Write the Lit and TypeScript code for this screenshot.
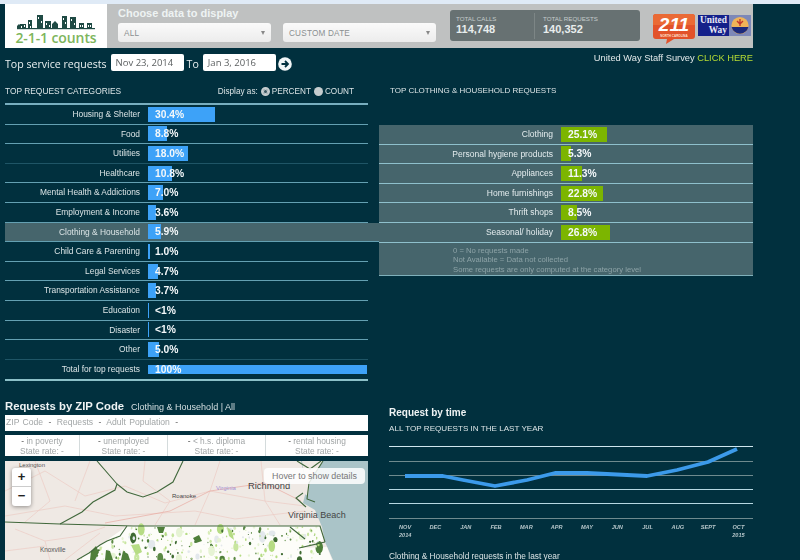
import { LitElement, html, css, svg } from "lit";
import { customElement } from "lit/decorators.js";

const CATS: [string, string, number][] = [
  ["Housing & Shelter", "30.4%", 30.4],
  ["Food", "8.8%", 8.8],
  ["Utilities", "18.0%", 18],
  ["Healthcare", "10.8%", 10.8],
  ["Mental Health & Addictions", "7.0%", 7],
  ["Employment & Income", "3.6%", 3.6],
  ["Clothing & Household", "5.9%", 5.9],
  ["Child Care & Parenting", "1.0%", 1],
  ["Legal Services", "4.7%", 4.7],
  ["Transportation Assistance", "3.7%", 3.7],
  ["Education", "<1%", 0.5],
  ["Disaster", "<1%", 0.5],
  ["Other", "5.0%", 5],
];
const SUBS: [string, string, number][] = [
  ["Clothing", "25.1%", 25.1],
  ["Personal hygiene products", "5.3%", 5.6],
  ["Appliances", "11.3%", 11.3],
  ["Home furnishings", "22.8%", 22.8],
  ["Thrift shops", "8.5%", 8.7],
  ["Seasonal/ holiday", "26.8%", 26.8],
];
const MONTHS: [string, string][] = [
  ["NOV", "2014"], ["DEC", ""], ["JAN", ""], ["FEB", ""], ["MAR", ""], ["APR", ""],
  ["MAY", ""], ["JUN", ""], ["JUL", ""], ["AUG", ""], ["SEPT", ""], ["OCT", "2015"],
];
const STATS = ["in poverty", "unemployed", "< h.s. diploma", "rental housing"];

function patches() {
  let seed = 17;
  const rnd = () => ((seed = (seed * 16807) % 2147483647) / 2147483647);
  const out = [];
  const dark = ["#4f7f3a", "#5c8a45", "#3f6b33"];
  const light = ["#b6dc84", "#d8edb8", "#c8e6a0", "#e6f3d4", "#e3e8ec"];
  for (let i = 0; i < 300; i++) {
    const x = 72 + rnd() * 248;
    const y = 66 + rnd() * 33;
    const isDark = rnd() > 0.72;
    const big = rnd() > 0.9;
    const r = big ? 1.8 + rnd() * 2 : 0.4 + rnd() * 0.9;
    const pick = isDark ? dark : light;
    const tone = pick[Math.floor(rnd() * pick.length)];
    const ry = r * (0.8 + rnd());
    if (x < 122 - (y - 65) * 1.5 || x > 316) continue;
    out.push(svg`<ellipse cx=${x} cy=${y} rx=${r} ry=${ry} fill=${tone} />`);
  }
  return out;
}

@customElement("app-root")
export class AppRoot extends LitElement {
  static styles = css`
    :host { display: block; width: 800px; height: 560px; overflow: hidden; background: #01303e; font-family: "Liberation Sans", Arial, sans-serif; color: #dfe8ea; }
    .strip { height: 4px; background: #dfeaf6; }
    .page { width: 748px; margin-left: 5px; filter: blur(0.3px); }
    .head { display: flex; height: 44px; background: #bfc1c1; }
    .logo { width: 102px; background: #fff; display: flex; flex-direction: column; align-items: center; justify-content: flex-end; padding-bottom: 3px; box-sizing: border-box; }
    .logo svg { display: block; }
    .logo b { font: 600 14px "Open Sans", sans-serif; color: #7db55c; line-height: 14px; letter-spacing: -0.1px; margin-top: 1px; white-space: nowrap; }
    .choose { width: 342px; padding: 3px 0 0 11px; box-sizing: border-box; }
    .choose h3 { margin: 0; font: bold 11px/13px "Liberation Sans", sans-serif; color: #eef3f3; }
    .selects { display: flex; gap: 12px; margin-top: 3px; }
    .sel { flex: 0 0 153px; height: 19px; border-radius: 3px; background: linear-gradient(#fafafa, #ececec); color: #8a8f90; font-size: 8.2px; display: flex; align-items: center; justify-content: space-between; padding: 1px 6px 0 6px; box-sizing: border-box; letter-spacing: .2px; }
    .sel i { width: 0; height: 0; border: 2.5px solid transparent; border-top: 4px solid #888; border-bottom: 0; }
    .stats { width: 190px; height: 31px; margin: 6px 0 0 1px; background: #677172; border-radius: 3px; display: flex; }
    .stat { color: #e8eded; }
    .stat small { display: block; font-size: 6.2px; line-height: 7px; color: #c5cccc; }
    .stat b { display: block; font-size: 11px; line-height: 12px; margin-top: 1px; }
    .stat.a { width: 85px; border-right: 1px solid #7d8686; box-sizing: border-box; height: 26px; margin-top: 3px; padding: 2px 0 0 6px; }
    .stat.b { padding: 5px 0 0 8px; }
    .brands { display: flex; margin: 9px 0 0 12px; gap: 2px; align-items: flex-start; }
    .uw { width: 53px; height: 21px; margin-top: 2px; background: #7d88b8; display: flex; }
    .uw div { width: 31px; background: #14208a; color: #e8e8f4; font: bold 9.4px/9.8px "Liberation Serif", serif; text-align: right; padding: 1px 2px 0 0; box-sizing: border-box; }
    .uw svg { flex: 1; }

    .service { display: flex; height: 32px; align-items: flex-start; }
    .service .t { font: 10.6px/16px "Open Sans", sans-serif; color: #eaf0f1; margin-top: 8px; white-space: nowrap; }
    .date { background: #fff; color: #5b5f60; font: 9.5px/17px "Open Sans", sans-serif; width: 73px; height: 17px; border-radius: 2px; margin-top: 6px; padding-left: 5px; box-sizing: border-box; }
    .date.first { margin-left: 4px; }
    .to { margin: 8px 4px 0 3px; font: 10.6px/16px "Open Sans", sans-serif; color: #eaf0f1; }
    .go { margin: 9px 0 0 2px; }
    .survey { margin-left: auto; margin-top: 3px; font-size: 9.3px; line-height: 14px; color: #e2e9ea; }
    .survey span { color: #b7dc33; }

    .cols { display: grid; grid-template-columns: 363px 374px; column-gap: 11px; }
    .title { height: 23px; font-size: 8.4px; line-height: 22px; color: #dbe4e6; display: flex; white-space: nowrap; }
    .title.r { font-size: 8px; padding-left: 11px; }
    .display { margin-left: auto; margin-right: 14px; display: flex; align-items: center; gap: 2px; font-size: 8.2px; }
    .radio { width: 9px; height: 9px; border-radius: 50%; background: #c6cdcf; box-sizing: border-box; margin-left: 1px; }
    .radio.on { border: 2px solid #c6cdcf; background: #3a5762; box-shadow: inset 0 0 0 1px #c6cdcf; }
    .table { border-top: 2px solid #78aebf; border-bottom: 2px solid #8cc0c8; }
    .row { display: flex; height: 19.6px; border-bottom: 1px solid #64a0b2; box-sizing: border-box; }
    .row.dim { border-bottom-color: #1f5566; }
    .row.sel2 { background: #46656c; margin-right: -11px; }
    .row.last { border-bottom: 0; }
    .lab { width: 135px; flex: none; text-align: right; font-size: 8.4px; line-height: 18px; color: #dbe4e6; white-space: nowrap; }
    .track { display: grid; margin-left: 8px; flex: 1; align-items: center; }
    .track > * { grid-area: 1 / 1; }
    .bar { height: 15px; background: #3da2f8; justify-self: start; }
    .bar.total { height: 9px; }
    .val { font-size: 10.3px; font-weight: bold; color: #f4f8fa; padding-left: 7px; line-height: 15px; }
    .panel { margin-top: 22px; background: #46656c; height: 151px; border-bottom: 1px solid #7fb0ba; box-sizing: border-box; }
    .panel .row { border-bottom-color: #8fc0cc; }
    .panel .lab { width: 174px; color: #e4ecee; font-size: 8.5px; }
    .panel .bar { background: #7cb500; }
    .notes { padding: 3px 0 0 74px; font-size: 7.7px; line-height: 9.6px; color: #8da3a7; }

    .zipt { margin-top: 18px; height: 16px; display: flex; align-items: baseline; gap: 7px; white-space: nowrap; }
    .zipt b { font-size: 11.3px; line-height: 15px; color: #eef3f4; }
    .zipt span { font-size: 9px; color: #d5dfe1; }
    .zipbar { background: #fff; height: 16px; font-size: 8.6px; line-height: 15px; color: #a2a6a7; padding-left: 1px; word-spacing: 1px; }
    .zipbar em { font-style: normal; color: #666; margin: 0 2px; }
    .st { display: grid; grid-template-columns: 75px 88px 98px 102px; height: 21px; margin-top: 4px; background: #fff; }
    .st div { text-align: center; font-size: 8.4px; line-height: 10px; color: #a2a6a7; padding-top: 1px; border-right: 1px solid #d4dbdc; box-sizing: border-box; }
    .st div:last-child { border-right: 0; }
    .st em { font-style: normal; color: #555; }
    .map { position: relative; height: 99px; margin-top: 5px; overflow: hidden; background: #efe9e4; }
    .map svg { display: block; }
    .zoom { position: absolute; left: 7px; top: 7px; width: 19px; height: 38px; background: #fff; border-radius: 3px; box-shadow: 0 1px 4px rgba(0,0,0,.4); color: #222; font: bold 13px/18px "Liberation Sans", sans-serif; text-align: center; }
    .zoom div:first-child { border-bottom: 1px solid #ccc; height: 18px; }
    .hover { position: absolute; left: 259px; top: 7px; width: 101px; height: 16px; background: rgba(255,255,255,.85); border-radius: 4px; color: #777; font-size: 8.9px; line-height: 16px; text-align: center; white-space: nowrap; }

    .rt { margin-top: 130px; font-size: 10px; font-weight: bold; line-height: 14px; color: #eef3f4; padding-left: 10px; }
    .rs { font-size: 8.1px; line-height: 12px; margin-top: 3px; padding-left: 10px; color: #dbe4e6; white-space: nowrap; }
    .chart { margin: 11px 0 0 10px; display: block; }
    .months { display: grid; grid-template-columns: repeat(12, 30.3px); margin: 4px 0 0 11px; font: italic bold 5.6px/8px "Liberation Sans", sans-serif; color: #b6c6ca; text-align: center; }
    .months div span { display: block; }
    .foot { padding-left: 10px; margin-top: 12px; font-size: 8.3px; line-height: 11px; color: #dbe4e6; white-space: nowrap; }
  `;

  private row(r: [string, string, number], scale: number, cls = "") {
    return html`<div class="row ${cls}">
      <div class="lab">${r[0]}</div>
      <div class="track">
        <div class="bar" style="width:${Math.max(r[2] * scale, 1)}px"></div>
        <div class="val">${r[1]}</div>
      </div>
    </div>`;
  }

  private skyline() {
    const b: [number, number, number][] = [[3,10,6],[11,6,4],[20,1,6],[28,7,6],[45,2,5],[53,3,6],[62,9,5],[70,9,5]];
    return html`<svg width="78" height="16" viewBox="0 0 78 16">
      ${b.map(([x, y, w]) => svg`<rect x=${x} y=${y} width=${w} height=${14 - y} fill="#1f4a44" />
        <rect x=${x + 1} y=${y + 2} width="1" height="2" fill="#fff" /><rect x=${x + w - 2} y=${y + 6 > 12 ? 11 : y + 6} width="1" height="2" fill="#fff" />`)}
      <path d="M35 14v-4l3-3 3 3v4zM0 14v-2l2-2 2 2v2z" fill="#1f4a44" />
      <rect x="0" y="14" width="78" height="1.2" fill="#1f4a44" />
    </svg>`;
  }

  private map() {
    return html`<svg width="363" height="99" viewBox="0 0 363 99">
      <rect width="363" height="99" fill="#efe9e4" />
      <polygon points="296,0 302,26 298,42 310,49 317,66 320,81 328,99 363,99 363,0" fill="#aac4c8" />
      <polygon points="297,0 318,0 305,20 303,35 298,32 300,18" fill="#efe9e4" />
      <polygon points="122,65 315,65 319,79 295,87 322,86 327,99 72,99 95,84" fill="#fdfdf9" />
      <g fill="none" stroke="#eccbc4" stroke-width=".7">
        <path d="M0 30 L40 10 L80 35 L120 25 L160 42 L205 30 L260 40 L300 45" />
        <path d="M30 0 L45 40 L20 61 M140 0 L138 20 L165 40 L150 64 M205 30 L190 64 M260 40 L275 64 M205 30 L215 0 M260 40 L256 0" />
        <path d="M0 55 L60 45 L110 55 L190 50 L230 58 L300 50 M85 0 L70 40" />
        <path d="M10 68 L40 80 L45 99 M40 80 L75 75 L100 66 M60 99 L95 72 M0 90 L40 85" />
      </g>
      <g fill="none" stroke="#e8aaa2" stroke-width=".7">
        <path d="M205 30 L260 22 L296 40 M205 30 L165 50 L100 62" />
      </g>
      ${patches()}
      <g fill="#4f7f3a"><path d="M152 66h8l-2 6h-4z" /><path d="M188 77l6-3 3 6-6 2zM86 90l5-5 3 6-4 8h-5z" /><path d="M101 89l4 1 3 9h-8zM118 90l5 3 2 6h-9z" /></g>
      <g fill="#b6dc84"><path d="M222 66l5 4 2 9-5-4zM126 84l8-1 3 8-6 3z" /></g>
      <g fill="none" stroke="#41683c" stroke-width="1.1">
        <path d="M92 0 L112 23 L110 29 L88 41 L77 51 L55 63" />
        <path d="M178 0 L168 21 L152 31 L138 36 L122 31 L112 23" />
        <path d="M0 61 L55 63 L128 65 L315 65 L320 81" />
        <path d="M122 65 L115 75 L102 80 L95 84 L84 92 L72 99" />
        <path d="M292 0 L305 8 L316 0 M318 0 L304 22 L302 38 L310 41 M298 32 L291 37 L301 46" />
        <path d="M320 81 L294 87 L312 83 M285 66 L300 78" />
      </g>
      <g font-family="Liberation Sans, sans-serif">
        <text x="14" y="6" font-size="6" fill="#555">Lexington</text>
        <text x="167" y="37" font-size="6" fill="#444">Roanoke</text>
        <text x="211" y="29" font-size="6" fill="#a592d6">Virginia</text>
        <text x="243" y="28" font-size="9.4" fill="#444">Richmond</text>
        <text x="283" y="57" font-size="9" fill="#444">Virginia Beach</text>
        <text x="35" y="91" font-size="6.4" fill="#555">Knoxville</text>
      </g>
    </svg>`;
  }

  private chart() {
    const ys = [0, 15, 29, 43, 57, 72];
    const cols = ["#cfe6ee", "#6f8a8e", "#6f8a8e", "#b6d8e2", "#b6d8e2", "#6f8a8e"];
    return html`<svg class="chart" width="364" height="73" viewBox="0 0 364 73">
      ${ys.map((y, i) => svg`<rect x="0" y=${y} width="364" height="1" fill=${cols[i]} />`)}
      <polyline fill="none" stroke="#3c9aea" stroke-width="3.8" stroke-linejoin="round"
        points="16,30 54,30 74,34 106,40 138,34 166,27 198,27 258,30 288,24 319,16 348,3" />
    </svg>`;
  }

  render() {
    return html`
      <div class="strip"></div>
      <div class="page">
        <div class="head">
          <div class="logo">${this.skyline()}<b>2-1-1 counts</b></div>
          <div class="choose">
            <h3>Choose data to display</h3>
            <div class="selects">
              <div class="sel">ALL<i></i></div>
              <div class="sel">CUSTOM DATE<i></i></div>
            </div>
          </div>
          <div class="stats">
            <div class="stat a"><small>TOTAL CALLS</small><b>114,748</b></div>
            <div class="stat b"><small>TOTAL REQUESTS</small><b>140,352</b></div>
          </div>
          <div class="brands">
            <svg width="44" height="32" viewBox="0 0 44 32">
              <path d="M4 1h36q3 0 3 3v19q0 3-3 3H22l-8 5 1-5H4q-3 0-3-3V4q0-3 3-3z" fill="#e2522a" />
              <path d="M4 1h36q3 0 3 3v8H1V4q0-3 3-3z" fill="#ea6a35" />
              <text x="22" y="18" text-anchor="middle" font-family="Liberation Sans, sans-serif" font-weight="bold" font-style="italic" font-size="19" fill="#fff">211</text>
              <text x="22" y="23.5" text-anchor="middle" font-family="Liberation Sans, sans-serif" font-weight="bold" font-size="3" fill="#ffe0d0">NORTH CAROLINA</text>
            </svg>
            <div class="uw">
              <div>United<br />Way</div>
              <svg viewBox="0 0 22 21">
                <circle cx="11" cy="10.5" r="8.6" fill="#f0b458" />
                <path d="M2.6 12h16.8a8.6 8.6 0 0 1-16.8 0z" fill="#1c2a7c" />
                <path d="M11 4v7M8 6l3 3 3-3" stroke="#c4372c" stroke-width="1.4" fill="none" />
              </svg>
            </div>
          </div>
        </div>
        <div class="service">
          <span class="t">Top service requests</span>
          <span class="date first">Nov 23, 2014</span>
          <span class="to">To</span>
          <span class="date">Jan 3, 2016</span>
          <svg class="go" width="14" height="14" viewBox="0 0 14 14">
            <circle cx="7" cy="7" r="6.8" fill="#f2f6f7" />
            <path d="M3.5 7h6M7 4l3 3-3 3" fill="none" stroke="#01303e" stroke-width="1.8" />
          </svg>
          <span class="survey">United Way Staff Survey <span>CLICK HERE</span></span>
        </div>
        <div class="cols">
          <div>
            <div class="title">TOP REQUEST CATEGORIES
              <span class="display">Display as: <i class="radio on"></i> PERCENT <i class="radio"></i> COUNT</span>
            </div>
            <div class="table">
              ${CATS.map((c, i) => this.row(c, 2.2, i === 6 ? "sel2" : i === 2 || i === 12 ? "dim" : ""))}
              <div class="row last">
                <div class="lab">Total for top requests</div>
                <div class="track"><div class="bar total" style="width:219px"></div><div class="val">100%</div></div>
              </div>
            </div>
            <div class="zipt"><b>Requests by ZIP Code</b><span>Clothing &amp; Household | All</span></div>
            <div class="zipbar">ZIP Code <em>-</em> Requests <em>-</em> Adult Population <em>-</em></div>
            <div class="st">
              ${STATS.map((s) => html`<div><em>-</em> ${s}<br />State rate: -</div>`)}
            </div>
            <div class="map">
              ${this.map()}
              <div class="zoom"><div>+</div><div>−</div></div>
              <div class="hover">Hover to show details</div>
            </div>
          </div>
          <div>
            <div class="title r">TOP CLOTHING &amp; HOUSEHOLD REQUESTS</div>
            <div class="panel">
              ${SUBS.map((s) => this.row(s, 1.83))}
              <div class="notes">0 = No requests made<br />Not Available = Data not collected<br />Some requests are only computed at the category level</div>
            </div>
            <div class="rt">Request by time</div>
            <div class="rs">ALL TOP REQUESTS IN THE LAST YEAR</div>
            ${this.chart()}
            <div class="months">
              ${MONTHS.map((m) => html`<div><span>${m[0]}</span><span>${m[1]}</span></div>`)}
            </div>
            <div class="foot">Clothing &amp; Household requests in the last year</div>
          </div>
        </div>
      </div>
    `;
  }
}
